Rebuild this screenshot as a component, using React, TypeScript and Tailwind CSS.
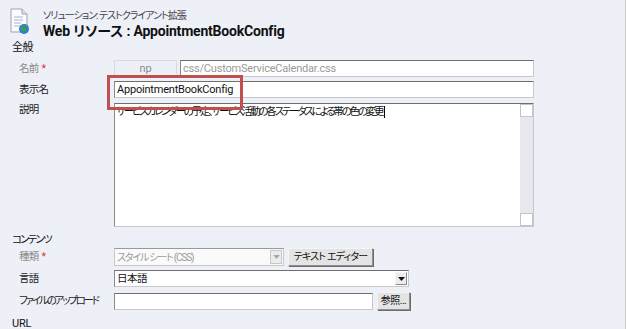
import React from "react";

function Label({ children, muted, req, cls }: { children: React.ReactNode; muted?: boolean; req?: boolean; cls?: string }) {
  return (
    <div
      className={`w-[114px] shrink-0 pl-[19px] whitespace-nowrap text-[10.5px] leading-[14px] ${cls ?? "tracking-[-0.8px]"} ${
        muted ? "text-[#8a8a8a]" : "text-[#222]"
      }`}
    >
      {children}
      {req && <span className="text-[#e03030] ml-[3px] tracking-normal">*</span>}
    </div>
  );
}

const inputCls =
  "h-[17px] border border-[#c6c8ce] border-t-[#6f6f6f] border-l-[#8a8a8a] bg-white text-[11px] leading-[15px] pl-[2px] overflow-hidden whitespace-nowrap";

function Btn({ children, w, cls }: { children: React.ReactNode; w: string; cls?: string }) {
  return (
    <div
      className={`${w} h-[18px] whitespace-nowrap border border-[#8f8f8f] border-t-[#f4f4f4] border-l-[#f4f4f4] bg-[#e4e4e4] shadow-[1px_1px_0_#6c6c6c] text-[10px] leading-[16px] text-[#111] flex items-center justify-center ${cls ?? ""}`}
    >
      {children}
    </div>
  );
}

export default function App() {
  return (
    <div className="w-[627px] h-[329px] overflow-hidden bg-[#eef0f8] flex relative font-[Roboto,'Noto_Sans_CJK_JP',sans-serif] [font-feature-settings:'palt'] tracking-[-0.2px]">
      <div className="w-[625px] shrink-0 flex flex-col">
        {/* header */}
        <div className="flex items-start pl-[9px] pt-[7px] h-[42px]">
          <svg width="22" height="27" viewBox="0 0 22 27" className="mt-[1px]">
            <path d="M2 1h11l5 5v18H2z" fill="#fbfbfd" stroke="#9aa2b4" strokeWidth="1" />
            <path d="M13 1v5h5" fill="#dfe3ec" stroke="#9aa2b4" strokeWidth="1" />
            <path d="M5 9h9M5 12h9M5 15h7M5 18h6" stroke="#a8b4cc" strokeWidth="1" />
            <circle cx="15" cy="21" r="5" fill="#2f7fd0" />
            <path d="M12 18c2 0 2 2 4 2s1 3 -1 4c-1-1-2-1-3-3z" fill="#3ca43c" />
            <path d="M16 16.5c1 1 2 1 3 2" stroke="#3ca43c" strokeWidth="1.5" fill="none" />
          </svg>
          <div className="ml-[12px] flex flex-col">
            <div className="text-[10px] leading-[13px] tracking-[-1px] text-[#444] mt-[2px]">ソリューション: テストクライアント拡張</div>
            <div className="text-[14px] leading-[17px] font-bold text-[#111] mt-[1px]">Web リソース : AppointmentBookConfig</div>
          </div>
        </div>

        {/* 全般 */}
        <div className="pl-[12px] text-[11px] leading-[15px] tracking-[-0.5px] text-[#111]">全般</div>
        <div className="ml-[12px] w-[556px] h-[2px] bg-[#d6d8de] mt-[2px]" />

        <div className="flex items-center mt-[3px] h-[17px]">
          <Label muted req>名前</Label>
          <div className="w-[63px] h-[17px] border border-[#d8dae2] bg-[#eef0f8] text-[11px] leading-[15px] text-[#8a8a8a] text-center">np</div>
          <div className={`${inputCls} ml-[3px] w-[354px] text-[#9a9a9a] bg-[#fafafa]`}>css/CustomServiceCalendar.css</div>
        </div>

        <div className="flex items-center mt-[4px] h-[17px]">
          <Label>表示名</Label>
          <div className={`${inputCls} w-[420px] text-[#111]`}>AppointmentBookConfig</div>
        </div>

        <div className="flex items-start mt-[5px]">
          <Label>説明</Label>
          <div className="w-[420px] h-[124px] border border-[#c6c8ce] border-t-[#6f6f6f] border-l-[#8a8a8a] bg-white flex">
            <div className="flex-1 text-[10.5px] leading-[14px] tracking-[-2.2px] text-[#111] pl-[1px] pt-[1px] whitespace-nowrap overflow-hidden">
              サービスカレンダーの予定、サービス活動の各ステータスによる帯の色の変更
              <span className="inline-block w-[1px] h-[12px] ml-[2px] bg-black align-middle" />
            </div>
            <div className="w-[13px] bg-[#e6e8ee] flex flex-col justify-between">
              <div className="w-[13px] h-[13px] bg-white border border-[#c2c4cc]" />
              <div className="w-[13px] h-[13px] bg-white border border-[#c2c4cc]" />
            </div>
          </div>
        </div>

        {/* コンテンツ */}
        <div className="pl-[12px] text-[10.5px] leading-[14px] tracking-[-1.8px] text-[#111] mt-[6px]">コンテンツ</div>
        <div className="ml-[12px] w-[556px] h-[2px] bg-[#d6d8de]" />

        <div className="flex items-center mt-[1px] h-[19px]">
          <Label muted req>種類</Label>
          <div className="w-[170px] h-[18px] border border-[#c6c8ce] border-t-[#9a9a9a] bg-[#fafafa] flex items-center">
            <div className="flex-1 text-[10px] leading-[15px] tracking-[-1.2px] text-[#9a9a9a] pl-[2px] whitespace-nowrap">スタイル シート (CSS)</div>
            <div className="w-[12px] h-[14px] mr-[1px] bg-[#ececec] border border-[#c8c8c8] flex items-center justify-center">
              <svg width="7" height="4" viewBox="0 0 7 4"><path d="M0 0h7L3.5 4z" fill="#a8a8a8" /></svg>
            </div>
          </div>
          <div className="ml-[4px]">
            <Btn w="w-[85px]" cls="tracking-[-0.8px]">テキスト エディター</Btn>
          </div>
        </div>

        <div className="flex items-center mt-[4px] h-[18px]">
          <Label>言語</Label>
          <div className="w-[295px] h-[17px] border border-[#c6c8ce] border-t-[#6f6f6f] border-l-[#8a8a8a] bg-white flex items-center">
            <div className="flex-1 text-[10.5px] leading-[15px] tracking-[-0.5px] text-[#111] pl-[2px]">日本語</div>
            <div className="w-[12px] h-[13px] mr-[1px] bg-[#ececec] border border-[#8a8a8a] border-t-[#f6f6f6] border-l-[#f6f6f6] flex items-center justify-center">
              <svg width="7" height="4" viewBox="0 0 7 4"><path d="M0 0h7L3.5 4z" fill="#111" /></svg>
            </div>
          </div>
        </div>

        <div className="flex items-center mt-[5px] h-[18px]">
          <Label cls="tracking-[-2.2px]">ファイルのアップロード</Label>
          <div className={`${inputCls} w-[259px]`} />
          <div className="ml-[4px]">
            <Btn w="w-[33px]" cls="tracking-[-0.5px]">参照...</Btn>
          </div>
        </div>

        <div className="pl-[12px] text-[11px] leading-[15px] text-[#111] mt-[6px]">URL</div>
      </div>
      <div className="w-[1px] bg-[#c8cad2]" />
      <div className="flex-1 bg-white" />

      {/* annotation */}
      <div className="absolute left-[107px] top-[75px] w-[136px] h-[35px] border-[3px] border-[#c0504d]" />
    </div>
  );
}
